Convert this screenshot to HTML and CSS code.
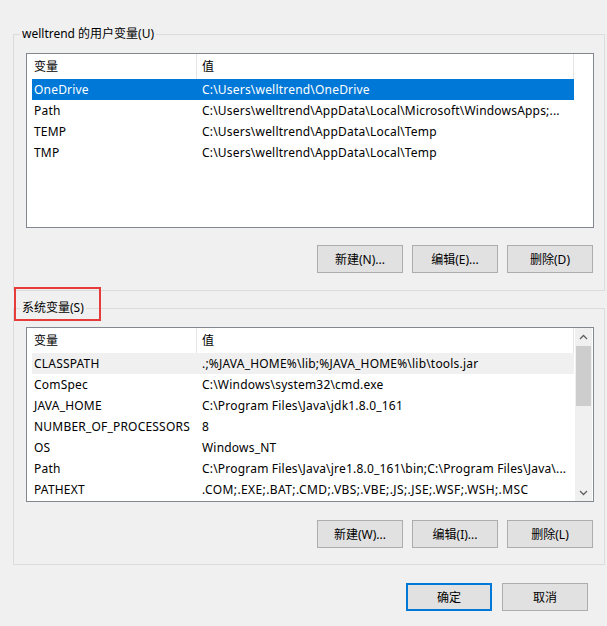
FILE: index.html
```html
<!DOCTYPE html>
<html lang="zh">
<head>
<meta charset="utf-8">
<title>环境变量</title>
<link rel="stylesheet" href="styles.css">
</head>
<body>
<div class="dialog">
  <fieldset class="group">
    <legend>welltrend 的用户变量(U)</legend>
    <div class="list">
      <div class="rows">
        <div class="row head"><span class="c1">变量</span><span class="c2">值</span></div>
        <div class="row sel"><span class="c1">OneDrive</span><span class="c2">C:\Users\welltrend\OneDrive</span></div>
        <div class="row"><span class="c1">Path</span><span class="c2">C:\Users\welltrend\AppData\Local\Microsoft\WindowsApps;...</span></div>
        <div class="row"><span class="c1">TEMP</span><span class="c2">C:\Users\welltrend\AppData\Local\Temp</span></div>
        <div class="row"><span class="c1">TMP</span><span class="c2">C:\Users\welltrend\AppData\Local\Temp</span></div>
      </div>
      <div class="sb-gap"></div>
    </div>
    <div class="btns">
      <button class="btn">新建(N)...</button>
      <button class="btn">编辑(E)...</button>
      <button class="btn">删除(D)</button>
    </div>
  </fieldset>

  <fieldset class="group group2">
    <legend>系统变量(S)</legend>
    <div class="list">
      <div class="rows">
        <div class="row head"><span class="c1">变量</span><span class="c2">值</span></div>
        <div class="row hov"><span class="c1">CLASSPATH</span><span class="c2">.;%JAVA_HOME%\lib;%JAVA_HOME%\lib\tools.jar</span></div>
        <div class="row"><span class="c1">ComSpec</span><span class="c2">C:\Windows\system32\cmd.exe</span></div>
        <div class="row"><span class="c1">JAVA_HOME</span><span class="c2">C:\Program Files\Java\jdk1.8.0_161</span></div>
        <div class="row"><span class="c1">NUMBER_OF_PROCESSORS</span><span class="c2">8</span></div>
        <div class="row"><span class="c1">OS</span><span class="c2">Windows_NT</span></div>
        <div class="row"><span class="c1">Path</span><span class="c2">C:\Program Files\Java\jre1.8.0_161\bin;C:\Program Files\Java\...</span></div>
        <div class="row"><span class="c1">PATHEXT</span><span class="c2 spaced">.COM;.EXE;.BAT;.CMD;.VBS;.VBE;.JS;.JSE;.WSF;.WSH;.MSC</span></div>
      </div>
      <div class="sb">
        <div class="sb-arrow"><svg width="9" height="6" viewBox="0 0 9 6"><path d="M1 5 L4.5 1.5 L8 5" fill="none" stroke="#606060" stroke-width="1.3"/></svg></div>
        <div class="sb-track"><div class="sb-thumb"></div></div>
        <div class="sb-arrow"><svg width="9" height="6" viewBox="0 0 9 6"><path d="M1 1 L4.5 4.5 L8 1" fill="none" stroke="#606060" stroke-width="1.3"/></svg></div>
      </div>
    </div>
    <div class="btns btns2">
      <button class="btn">新建(W)...</button>
      <button class="btn">编辑(I)...</button>
      <button class="btn">删除(L)</button>
    </div>
  </fieldset>

  <div class="footer">
    <button class="btn primary">确定</button>
    <button class="btn">取消</button>
  </div>

  <div class="annot"></div>
</div>
</body>
</html>
```

FILE: styles.css
```css
html, body {
  margin: 0;
  padding: 0;
  background: #f0f0f0;
}
body {
  font-family: "Noto Sans", "Noto Sans CJK SC", sans-serif;
  font-size: 12px;
  color: #000;
}
.dialog {
  position: relative;
  width: 592px;
  padding: 26px 2px 16px 13px;
}
.group {
  margin: 0;
  padding: 11px 10px 17px 12px;
  border: 1px solid #dcdcdc;
  min-width: 0;
}
.group2 {
  margin-top: 9px;
  padding-bottom: 16px;
}
.group legend {
  margin-left: -6px;
  padding: 0 2px;
  line-height: 16px;
  height: 16px;
}
.list {
  display: flex;
  height: 173px;
  border: 1px solid #828790;
  background: #fff;
}
.rows {
  flex: 1;
  padding-left: 5px;
  min-width: 0;
}
.sb-gap {
  width: 17px;
  margin: 0 1px;
}
.row {
  display: flex;
  height: 21px;
  line-height: 21px;
  white-space: nowrap;
  letter-spacing: 0.2px;
}
.row .c1 {
  width: 162px;
  padding-left: 2px;
  flex: none;
  overflow: hidden;
}
.row .c2 {
  flex: 1;
  padding-left: 6px;
  overflow: hidden;
}
.row .c2.spaced {
  letter-spacing: 0.4px;
}
.row.head {
  height: 25px;
  line-height: 25px;
  letter-spacing: 0;
}
.row.head .c1 {
  border-right: 1px solid #e5e5e5;
}
.row.head .c2 {
  padding-left: 5px;
  border-right: 1px solid #e5e5e5;
}
.row.sel {
  background: #0078d7;
  color: #fff;
}
.row.hov {
  background: #f0f0f0;
}
.sb {
  width: 17px;
  margin: 0 1px;
  display: flex;
  flex-direction: column;
  background: #f0f0f0;
}
.sb-arrow {
  height: 17px;
  display: flex;
  align-items: center;
  justify-content: center;
  flex: none;
}
.sb-track {
  flex: 1;
  padding: 1px 1px 0 1px;
}
.sb-thumb {
  height: 60px;
  background: #cdcdcd;
}
.btns {
  display: flex;
  justify-content: flex-end;
  gap: 9px;
  margin-top: 17px;
  padding-right: 1px;
}
.btns2 {
  margin-top: 18px;
}
.btn {
  width: 86px;
  height: 28px;
  margin: 0;
  padding: 0;
  background: #e1e1e1;
  border: 1px solid #adadad;
  font-family: "Noto Sans", "Noto Sans CJK SC", sans-serif;
  font-size: 12px;
  color: #000;
}
.btn.primary {
  border: 2px solid #0078d7;
}
.footer {
  display: flex;
  justify-content: flex-end;
  gap: 10px;
  margin-top: 18px;
  padding-right: 17px;
}
.annot {
  position: absolute;
  left: 14px;
  top: 287px;
  width: 83px;
  height: 30px;
  border: 2px solid #e53b3b;
}
```
